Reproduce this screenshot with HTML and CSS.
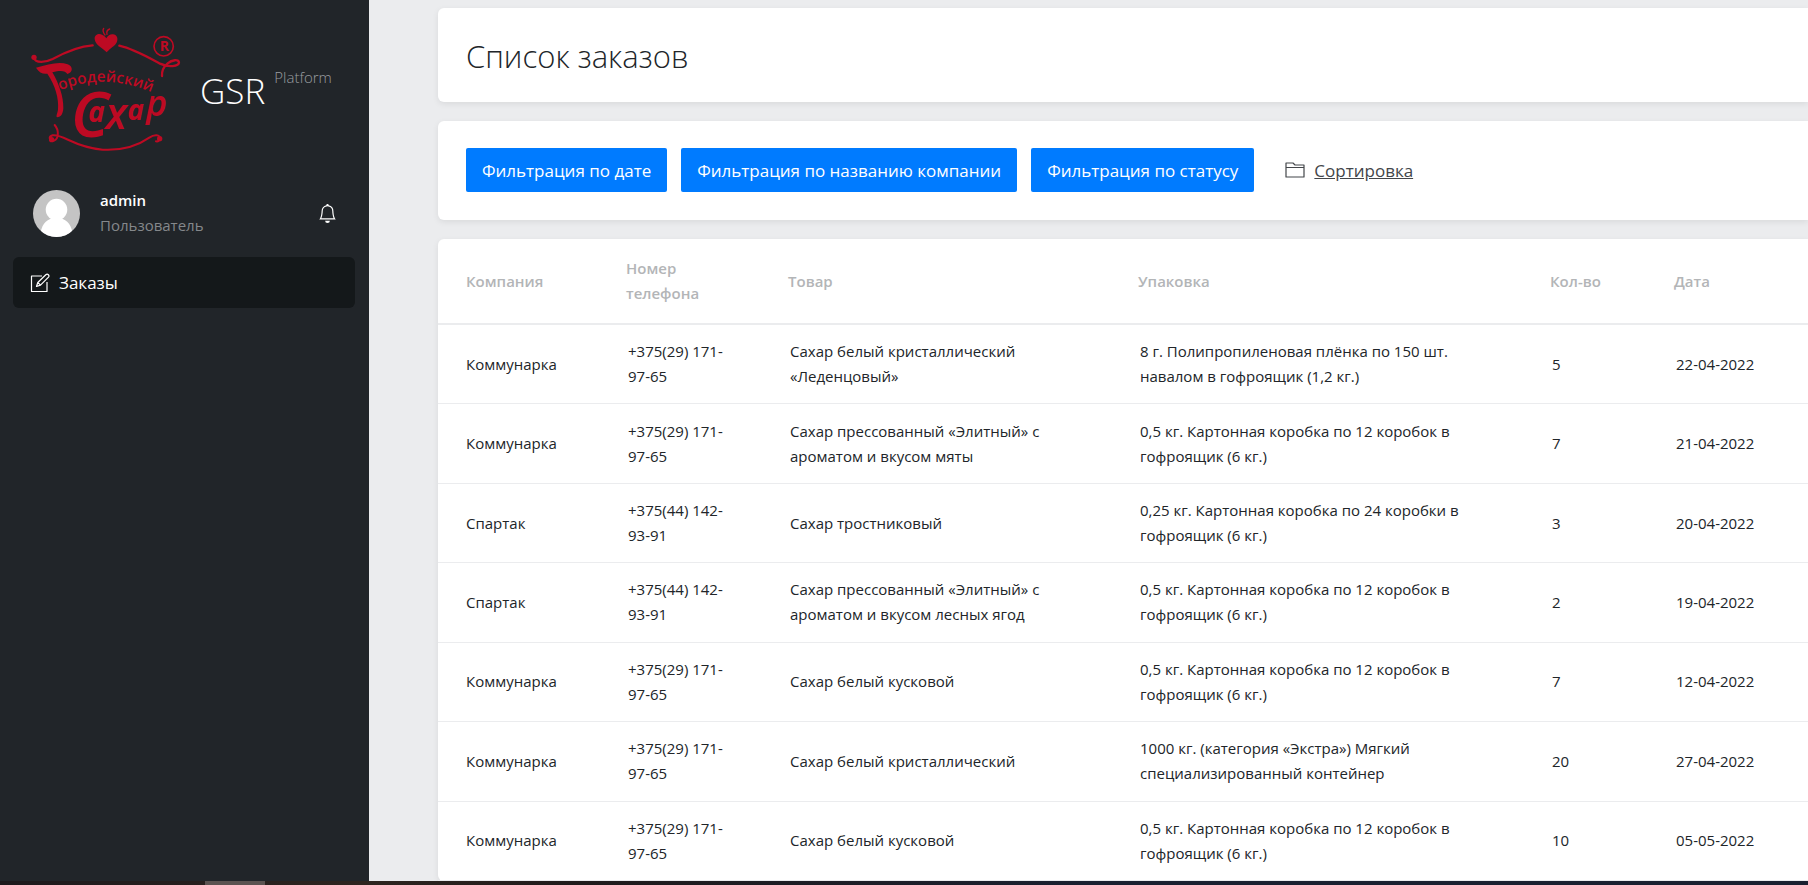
FILE: index.html
```html
<!DOCTYPE html>
<html lang="ru">
<head>
<meta charset="utf-8">
<title>GSR Platform</title>
<link rel="stylesheet" href="styles.css">
</head>
<body>
<div class="app">
  <aside class="sidebar">
    <div class="brand">
      <svg class="brand-logo" viewBox="0 0 510 435" role="img" aria-label="Городейский Сахар">
        <defs><path id="arc" d="M120 226Q250 172 396 232"/></defs>
        <g fill="none" stroke="#bd0a23" stroke-linecap="round">
          <path stroke-width="7" d="M42 128c4 18 36 14 56 4 40-22 76-38 120-41"/>
          <path stroke-width="7" d="M298 92c44 10 92 38 122 54 26 12 56 8 57-3 0-12-22-8-34 2-14 12-18 26-17 38"/>
          <path stroke-width="6" d="M104 330c14 16 12 42-2 47-14 3-18-12-4-16 34-4 62 36 150 43 74 4 120-22 140-36 14-10 34-10 32 4-2 6-6 8-12 7"/>
          <path stroke-width="4" d="M255 60c-6-8-8-14-4-20M261 58c-2-8 2-14 8-16"/>
          <circle cx="431" cy="94" r="29" stroke-width="5"/>
        </g>
        <g fill="#bd0a23">
          <circle cx="42" cy="127" r="8"/>
          <circle cx="95" cy="374" r="8"/>
          <circle cx="419" cy="371" r="8"/>
          <path d="M260 112c-12-13-35-22-36-40-1-13 13-18 22-13 6 3 10 6 13 11 5-9 12-13 20-12 11 1 16 11 12 22-5 13-21 19-31 32z"/>
          <path d="M48 158c36-8 66-20 95-10 18 7 15 26-1 29-6-11-22-11-45-5 20 34 34 74 33 108-1 16-6 26-19 27-4-4 2-12 3-24 3-32-8-72-32-107-14 2-24-3-34-18z"/>
        </g>
        <g class="logo-text">
          <text class="logo-small"><textPath href="#arc">ородейский</textPath></text>
          <text class="logo-large" x="152" y="367">С</text>
          <text class="logo-mid" x="204" y="320">а</text>
          <text class="logo-big" x="256" y="342">х</text>
          <text class="logo-mid" x="322" y="316">а</text>
          <text class="logo-tall" x="378" y="302">р</text>
          <text class="logo-mark" x="419" y="109">R</text>
        </g>
      </svg>
      <div class="brand-name">GSR <span class="brand-sub">Platform</span></div>
    </div>
    <div class="user">
      <svg class="avatar" viewBox="0 0 48 48" aria-hidden="true">
        <defs><clipPath id="round"><circle cx="24" cy="24" r="24"/></clipPath></defs>
        <g clip-path="url(#round)">
          <path fill="#c4c4c4" d="M0 0h48v48H0z"/>
          <circle cx="24" cy="20" r="11" fill="#fff"/>
          <path fill="#fff" d="M7 48c1-12 6-18 13-19h8c7 1 12 7 13 19z"/>
        </g>
      </svg>
      <div class="user-text">
        <div class="user-name">admin</div>
        <div class="user-role">Пользователь</div>
      </div>
      <button class="bell" type="button" aria-label="Уведомления">
        <svg viewBox="0 0 16 16" width="19" height="19" fill="currentColor"><path d="M8 16a2 2 0 0 0 2-2H6a2 2 0 0 0 2 2zM8 1.918l-.797.161A4.002 4.002 0 0 0 4 6c0 .628-.134 2.197-.459 3.742-.16.767-.376 1.566-.663 2.258h10.244c-.287-.692-.502-1.49-.663-2.258C12.134 8.197 12 6.628 12 6a4.002 4.002 0 0 0-3.203-3.92L8 1.917zM14.22 12c.223.447.481.801.78 1H1c.299-.199.557-.553.78-1C2.68 10.2 3 6.88 3 6c0-2.42 1.72-4.44 4.005-4.901a1 1 0 1 1 1.99 0A5.002 5.002 0 0 1 13 6c0 .88.32 4.2 1.22 6z"/></svg>
      </button>
    </div>
    <nav class="menu">
      <a class="menu-item" href="#">
        <svg viewBox="0 0 20 20" width="20" height="20" fill="none" stroke="currentColor" stroke-width="1.2" stroke-linejoin="round" aria-hidden="true"><path d="M12 3H1.500v15.500h15.500V9"/><path d="M6.500 13.500l1.300-4 8-7.800c1.900-1.400 4 .7 2.700 2.400l-8 8zM7.800 9.500l2.700 2.600"/></svg>
        Заказы
      </a>
    </nav>
  </aside>
  <main class="content">
    <section class="card title-card"><h1>Список заказов</h1></section>
    <section class="card filters">
      <button class="btn" type="button">Фильтрация по дате</button>
      <button class="btn" type="button">Фильтрация по названию компании</button>
      <button class="btn" type="button">Фильтрация по статусу</button>
      <a class="sort" href="#">
        <svg viewBox="0 0 20 16" width="20" height="16" fill="none" stroke="currentColor" stroke-width="1.2" stroke-linejoin="round" aria-hidden="true"><path d="M1 15V1h7l2 2h9v12zM1 5.500h18"/></svg>
        <span>Сортировка</span>
      </a>
    </section>
    <section class="card orders">
      <table>
        <colgroup><col class="c-company"><col class="c-phone"><col class="c-goods"><col class="c-pack"><col class="c-count"><col class="c-date"></colgroup>
        <thead>
          <tr><th>Компания</th><th>Номер телефона</th><th>Товар</th><th>Упаковка</th><th>Кол-во</th><th>Дата</th></tr>
        </thead>
        <tbody>
          <tr><td>Коммунарка</td><td>+375(29) 171-97-65</td><td>Сахар белый кристаллический «Леденцовый»</td><td>8 г. Полипропиленовая плёнка по 150 шт. навалом в гофроящик (1,2 кг.)</td><td>5</td><td>22-04-2022</td></tr>
          <tr><td>Коммунарка</td><td>+375(29) 171-97-65</td><td>Сахар прессованный «Элитный» с ароматом и вкусом мяты</td><td>0,5 кг. Картонная коробка по 12 коробок в гофроящик (6 кг.)</td><td>7</td><td>21-04-2022</td></tr>
          <tr><td>Спартак</td><td>+375(44) 142-93-91</td><td>Сахар тростниковый</td><td>0,25 кг. Картонная коробка по 24 коробки в гофроящик (6 кг.)</td><td>3</td><td>20-04-2022</td></tr>
          <tr><td>Спартак</td><td>+375(44) 142-93-91</td><td>Сахар прессованный «Элитный» с ароматом и вкусом лесных ягод</td><td>0,5 кг. Картонная коробка по 12 коробок в гофроящик (6 кг.)</td><td>2</td><td>19-04-2022</td></tr>
          <tr><td>Коммунарка</td><td>+375(29) 171-97-65</td><td>Сахар белый кусковой</td><td>0,5 кг. Картонная коробка по 12 коробок в гофроящик (6 кг.)</td><td>7</td><td>12-04-2022</td></tr>
          <tr><td>Коммунарка</td><td>+375(29) 171-97-65</td><td>Сахар белый кристаллический</td><td>1000 кг. (категория «Экстра») Мягкий специализированный контейнер</td><td>20</td><td>27-04-2022</td></tr>
          <tr><td>Коммунарка</td><td>+375(29) 171-97-65</td><td>Сахар белый кусковой</td><td>0,5 кг. Картонная коробка по 12 коробок в гофроящик (6 кг.)</td><td>10</td><td>05-05-2022</td></tr>
        </tbody>
      </table>
    </section>
  </main>
</div>
<div class="dock"><span class="dock-item"></span></div>
</body>
</html>
```
FILE: styles.css
```css
* { box-sizing: border-box; }

body {
  margin: 0;
  height: 100vh;
  display: flex;
  flex-direction: column;
  overflow: hidden;
  background: #ebecee;
  color: #212529;
  font-family: "Open Sans", "Noto Sans", sans-serif;
  font-size: 15px;
  line-height: 25px;
}

.app { flex: 1; min-height: 0; display: flex; }

.sidebar {
  flex: 0 0 369px;
  padding: 15px 14px 15px 13px;
  background: #212529;
  color: #fff;
}

.brand { display: flex; align-items: center; gap: 10px; padding-left: 7px; }
.brand-logo { width: 170px; height: 145px; flex: none; }
.brand-name { padding-bottom: 7px; font-size: 35px; font-weight: 300; line-height: 48px; white-space: nowrap; }
.brand-sub { font-size: 15px; color: #9a9da0; vertical-align: 21px; }

.logo-text { fill: #bd0a23; font-family: "Open Sans", sans-serif; font-weight: 600; }
.logo-small { font-size: 46px; }
.logo-large { font-size: 190px; font-style: italic; }
.logo-mid { font-size: 84px; font-style: italic; font-weight: 700; }
.logo-big { font-size: 128px; font-style: italic; }
.logo-tall { font-size: 108px; font-style: italic; }
.logo-mark { font-size: 42px; font-weight: 700; }

.user {
  display: flex;
  align-items: center;
  gap: 20px;
  padding: 28px 18px 19px 20px;
}
.avatar { width: 47px; height: 47px; }
.user-text { flex: 1; }
.user-name { font-weight: 600; }
.user-role { color: #85888b; }
.bell { padding: 0; border: 0; background: none; color: #fff; line-height: 0; }

.menu-item {
  display: flex;
  align-items: center;
  gap: 9px;
  height: 51px;
  padding: 0 17px;
  border-radius: 6px;
  background: #14181a;
  color: #fff;
  font-size: 17px;
  text-decoration: none;
}

.content {
  flex: 1;
  min-width: 0;
  display: flex;
  flex-direction: column;
  gap: 19px;
  padding: 8px 0 0 69px;
}

.card {
  background: #fff;
  border-radius: 6px 0 0 6px;
  box-shadow: 0 2px 6px rgba(0, 0, 0, 0.08);
}

.title-card { padding: 28px 28px 26px; }
.title-card h1 { margin: 0; font-size: 31px; font-weight: 300; line-height: 40px; }

.filters { display: flex; align-items: center; gap: 14px; padding: 27px 28px 28px; }
.btn {
  height: 44px;
  padding: 0 16px;
  border: 0;
  border-radius: 2px;
  background: #007bff;
  color: #fff;
  font: inherit;
  font-size: 17px;
}
.sort {
  display: flex;
  align-items: center;
  gap: 9px;
  margin-left: 17px;
  color: #43464a;
  font-size: 17px;
}

.orders { flex: 1; min-height: 0; }
.orders table { width: 100%; height: 100%; border-collapse: collapse; table-layout: fixed; }
.orders th, .orders td { padding: 14px 36px 14px 12px; text-align: left; vertical-align: middle; }
.orders th { padding-top: 17px; padding-bottom: 17px; color: #b3b5b7; font-weight: 600; border-bottom: 2px solid #ebecee; }
.orders td { padding-left: 14px; border-bottom: 1px solid #ebecee; }
.orders th:first-child, .orders td:first-child { padding-left: 28px; }
.orders th:nth-child(n+5), .orders td:nth-child(n+5) { padding-right: 0; }
.c-company { width: 176px; }
.c-phone { width: 162px; }
.c-goods { width: 350px; }
.c-pack { width: 412px; }
.c-count { width: 124px; }

.dock {
  flex: 0 0 4px;
  display: flex;
  padding-left: 205px;
  background: linear-gradient(90deg, #1d191c, #2e241f 20%, #1f1b1c 32%, #1a2030 60%);
}
.dock-item { width: 60px; background: #5b5351; }
```
